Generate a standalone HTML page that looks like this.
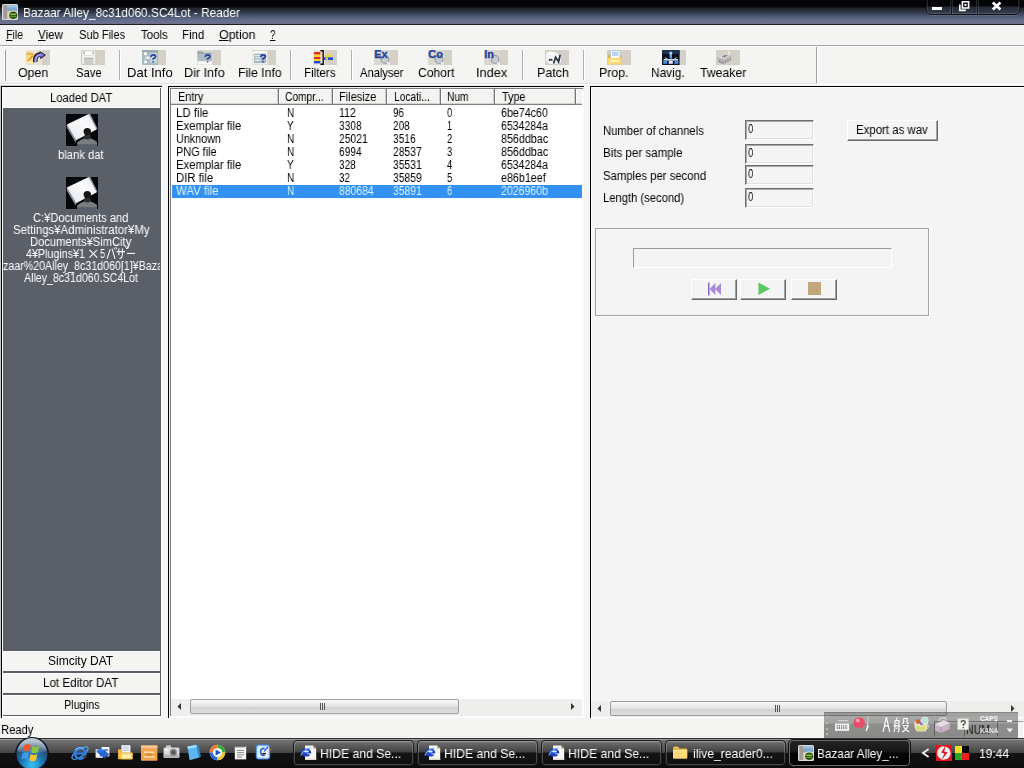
<!DOCTYPE html>
<html>
<head>
<meta charset="utf-8">
<title>Bazaar Alley_8c31d060.SC4Lot - Reader</title>
<style>
*{box-sizing:border-box;margin:0;padding:0}
html,body{width:1024px;height:768px;overflow:hidden;background:#f4f4f2;font-family:"Liberation Sans",sans-serif;color:#000}
#root{position:absolute;left:0;top:0;width:1024px;height:768px;overflow:hidden;background:#f4f4f2}
#root div,#root svg{position:absolute}
.t{white-space:nowrap;line-height:1;transform-origin:0 0;will-change:transform}
u{text-decoration:underline;text-underline-offset:1px}
.sep{top:50px;width:2px;height:30px;border-left:1px solid #b0b0b0;border-right:1px solid #fff}
.ib{top:50px;width:24px;height:15px;background:#d4d0c8}
.btn{background:#f4f4f2;border:1px solid;border-color:#fff #707070 #707070 #fff;box-shadow:inset -1px -1px 0 #a8a8a8}
.sunk{border:1px solid;border-color:#9a9a9a #fff #fff #9a9a9a}
</style>
</head>
<body>
<div id="root">

<div style="left:0;top:0;width:1024px;height:25px;background:linear-gradient(#0e1014 0,#040406 1px,#050608 7px,#20242a 8px,#262a34 10px,#30364a 12px,#47526a 15.5px,#5a6682 18.5px,#676f90 21px,#6e6f8a 23.5px,#1c1e26 24px,#1c1e26 25px)"></div>
<svg style="left:2px;top:4px" width="16" height="16" viewBox="0 0 16 16">
  <rect x="0" y="0" width="16" height="16" rx="1.5" fill="#d8dadc"/>
  <rect x="1" y="1" width="14" height="14" fill="#b9bcc0"/>
  <rect x="1.5" y="1" width="3.5" height="14" fill="#a29a96"/>
  <rect x="5" y="1" width="10" height="6.5" fill="#7fa6cc"/>
  <rect x="5" y="1" width="10" height="2.5" fill="#9fc0dc"/>
  <rect x="5" y="7" width="10" height="8" fill="#c9c6bc"/>
  <ellipse cx="11" cy="11" rx="5" ry="4.6" fill="#e6e3b4"/>
  <ellipse cx="11.2" cy="11.2" rx="4" ry="3.8" fill="#2d4a18"/>
  <rect x="8.3" y="9.6" width="5.8" height="1.4" fill="#8cc83c"/>
  <rect x="8.3" y="11.8" width="5.8" height="1.2" fill="#5e9a28"/>
</svg>
<div class="t" style="left:22.79px;top:6.0px;font-size:13px;color:#fff;transform:scaleX(0.9124)">Bazaar Alley_8c31d060.SC4Lot - Reader</div>
<div style="left:926px;top:-5px;width:94px;height:20px;border:1px solid #101218;border-radius:5px;background:linear-gradient(#000 0,#06070a 10px,#262a36 11px,#3a4054 19px);box-shadow:inset 0 0 0 1px rgba(255,255,255,.13),0 1px 0 rgba(255,255,255,.12)"></div>
<div style="left:950px;top:0;width:3px;height:14px;background:rgba(255,255,255,.13)"></div>
<div style="left:976px;top:0;width:3px;height:14px;background:rgba(255,255,255,.13)"></div>
<div style="left:951px;top:0;width:1px;height:14px;background:#101218"></div>
<div style="left:977px;top:0;width:1px;height:14px;background:#101218"></div>
<div style="left:932px;top:7px;width:10px;height:3px;background:#fff"></div>
<svg style="left:958px;top:0" width="13" height="12" viewBox="0 0 13 12"><path d="M4.4 1.8h6.2v6.2h-6.2z" fill="none" stroke="#fff" stroke-width="1.6"/><rect x="6.5" y="3.9" width="2" height="2" fill="#fff"/><path d="M1.8 4.4v6h6" fill="none" stroke="#fff" stroke-width="1.6"/></svg>
<svg style="left:991px;top:1px" width="11" height="10" viewBox="0 0 11 10"><path d="M1.8 1.6L9.4 8.6M9.4 1.6L1.8 8.6" stroke="#fff" stroke-width="2.7"/></svg>
<div style="left:0;top:25px;width:1024px;height:20px;background:#f4f4f2"></div><div class="t" style="left:5.98px;top:28.0px;font-size:13px;color:#000;transform:scaleX(0.8165)"><u>F</u>ile</div><div class="t" style="left:38.30px;top:28.0px;font-size:13px;color:#000;transform:scaleX(0.8965)"><u>V</u>iew</div><div class="t" style="left:78.70px;top:28.0px;font-size:13px;color:#000;transform:scaleX(0.8502)">Sub Files</div><div class="t" style="left:140.80px;top:28.0px;font-size:13px;color:#000;transform:scaleX(0.8817)">Tools</div><div class="t" style="left:181.81px;top:28.0px;font-size:13px;color:#000;transform:scaleX(0.8853)">Find</div><div class="t" style="left:218.60px;top:28.0px;font-size:13px;color:#000;transform:scaleX(0.9535)"><u>O</u>ption</div><div class="t" style="left:270.00px;top:28.0px;font-size:13px;color:#000;transform:scaleX(0.7571)"><u>?</u></div>
<div style="left:0;top:45px;width:1024px;height:1px;background:#a6a6a6"></div>
<div style="left:0;top:46px;width:1024px;height:1px;background:#fff"></div>
<div style="left:4px;top:50px;width:1px;height:31px;background:#fff"></div>
<div style="left:5px;top:50px;width:1px;height:31px;background:#9c9c9c"></div>
<div class="sep" style="left:119px"></div>
<div class="sep" style="left:290px"></div>
<div class="sep" style="left:351px"></div>
<div class="sep" style="left:522px"></div>
<div class="sep" style="left:583px"></div>
<div style="left:816px;top:47px;width:1px;height:37px;background:#a0a0a0"></div>
<div style="left:817px;top:47px;width:1px;height:37px;background:#fff"></div>
<div style="left:0;top:83px;width:817px;height:1px;background:#e2e2e0"></div>
<div style="left:0;top:84px;width:1024px;height:1px;background:#fff"></div>
<svg style="left:26px;top:50px" width="24" height="15" viewBox="0 0 24 15"><rect width="24" height="15" fill="#d4d0c8"/><rect x="0" y="0" width="16" height="15" fill="#ece4d0"/>
<path d="M0.5 2.5H6L7 3.8H9.5V13.2H0.5Z" fill="#f0b848"/><path d="M0.5 5.2H9.5V13.2H0.5Z" fill="#fcdc90"/>
<path d="M1.6 11L7 5.6" stroke="#e8982c" stroke-width="1.6"/><rect x="0.5" y="11.8" width="9" height="1.4" fill="#fff4d0"/>
<path d="M9.4 12.2Q8.2 4.6 15.6 4.4" fill="none" stroke="#1c1c40" stroke-width="4.6"/>
<path d="M13.6 1L20 5L14.4 9.2Z" fill="#1c1c40"/>
<path d="M9.6 12Q8.6 5 15.4 4.6" fill="none" stroke="#9c94e4" stroke-width="2.4"/>
<path d="M14.4 2.4L18.4 5L14.8 7.8Z" fill="#8078d0"/></svg><svg style="left:81px;top:50px" width="24" height="15" viewBox="0 0 24 15"><rect width="24" height="15" fill="#d4d0c8"/><rect x="0.6" y="0.6" width="14.2" height="13.8" rx="1" fill="#f2f2f0" stroke="#c4c4c0" stroke-width="0.9"/>
<rect x="3" y="0.8" width="9.4" height="4.8" fill="#fcfcfc" stroke="#d4d4d0" stroke-width="0.7"/>
<rect x="2.6" y="1.4" width="1.4" height="2.6" fill="#b8b8b4"/><rect x="11.2" y="1.4" width="1.4" height="2.6" fill="#b8b8b4"/>
<rect x="3" y="7.8" width="9.4" height="6.4" fill="#cccbc6"/><rect x="3" y="7.8" width="9.4" height="1.2" fill="#b8b8b4"/></svg><svg style="left:142px;top:50px" width="24" height="15" viewBox="0 0 24 15"><rect width="24" height="15" fill="#d4d0c8"/><rect width="16" height="15" fill="#a8b8bc"/>
<rect x="0" y="0" width="16" height="2" fill="#98a8b0"/>
<rect x="2" y="2.4" width="3" height="2.6" fill="#f4f8f8"/><rect x="4.6" y="6.4" width="3" height="2.6" fill="#f4f8f8"/><rect x="2" y="10.6" width="3" height="2.6" fill="#f4f8f8"/>
<path d="M3.4 5V11M3.4 7.6H5" stroke="#d8e4e4" stroke-width="0.8"/>
<rect x="7.6" y="3.2" width="7.4" height="10" fill="#c4d4d8"/><path d="M9.0 7Q9.0 4.8 11.2 4.8Q13.6 4.8 13.6 6.8Q13.6 8 11.2 8.8V9.8M11.2 11.2V12.6" fill="none" stroke="#2840a0" stroke-width="1.7"/></svg><svg style="left:197px;top:50px" width="24" height="15" viewBox="0 0 24 15"><rect width="24" height="15" fill="#d4d0c8"/><rect width="16" height="15" fill="#dcd8d0"/>
<path d="M0.6 1.6H5.4L6.4 2.8H15V13.6H0.6Z" fill="#aebcc0"/><path d="M0.6 1.6H5.4L6.4 2.8H15V4H0.6Z" fill="#98a8ac"/>
<path d="M0.6 11.2H15V13Q15 14.4 13.6 14.4H2Q0.6 14.4 0.6 13Z" fill="#fcfcfc"/><path d="M8.4 7Q8.4 4.8 10.6 4.8Q13.0 4.8 13.0 6.8Q13.0 8 10.6 8.8V9.8M10.6 11.2V12.6" fill="none" stroke="#2840a0" stroke-width="1.7"/></svg><svg style="left:252px;top:50px" width="24" height="15" viewBox="0 0 24 15"><rect width="24" height="15" fill="#d4d0c8"/><rect width="16" height="15" fill="#dcd8d0"/>
<rect x="0.6" y="1.2" width="14.6" height="13" rx="1.2" fill="#fafafa"/>
<rect x="1.8" y="3.6" width="12.4" height="9.6" fill="#a8b8c0"/>
<path d="M3 5.6H8.4M3 8H8.4M3 10.4H8.4" stroke="#e8f0f0" stroke-width="1.1"/><path d="M8.8 7Q8.8 4.8 11.0 4.8Q13.4 4.8 13.4 6.8Q13.4 8 11.0 8.8V9.8M11.0 11.2V12.6" fill="none" stroke="#2840a0" stroke-width="1.7"/></svg><svg style="left:313px;top:50px" width="24" height="15" viewBox="0 0 24 15"><rect width="24" height="15" fill="#d4d0c8"/><rect width="12" height="15" fill="#e8e4dc"/>
<rect x="1" y="2" width="6.4" height="2.6" fill="#e8281c"/><rect x="1" y="4.6" width="6.4" height="2.4" fill="#f8d81c"/>
<rect x="1" y="7" width="6.4" height="2" fill="#e8281c"/><rect x="1" y="9" width="6.4" height="2" fill="#f8d81c"/><rect x="1" y="11" width="6.4" height="2.4" fill="#2048d8"/>
<path d="M7.4 0.8H10.2V14.2H7.4" fill="none" stroke="#101010" stroke-width="1.4"/>
<rect x="12.4" y="4.6" width="6" height="2.4" fill="#f8d81c"/><rect x="11" y="7.4" width="9" height="2.6" fill="#2048d8"/><rect x="12.4" y="7.6" width="2.6" height="2.2" fill="#f8d81c"/></svg><svg style="left:374px;top:50px" width="24" height="15" viewBox="0 0 24 15"><rect width="24" height="15" fill="#d4d0c8"/><rect width="16" height="15" fill="#dcd8d0"/>
<circle cx="11" cy="9.4" r="3.9" fill="#c8ccd0" stroke="#9098a0" stroke-width="1.1"/>
<path d="M13.2 12.2L15.6 14.6" stroke="#f4f4f4" stroke-width="1.6"/>
<text x="0.2" y="8.4" font-family="Liberation Sans, sans-serif" font-weight="bold" font-size="11" fill="#2440a0" stroke="#2440a0" stroke-width="0.3">Ex</text></svg><svg style="left:428px;top:50px" width="24" height="15" viewBox="0 0 24 15"><rect width="24" height="15" fill="#d4d0c8"/><rect width="16" height="15" fill="#dcd8d0"/>
<circle cx="11" cy="9.4" r="3.9" fill="#c8ccd0" stroke="#9098a0" stroke-width="1.1"/>
<path d="M13.2 12.2L15.6 14.6" stroke="#f4f4f4" stroke-width="1.6"/>
<text x="0.2" y="8.4" font-family="Liberation Sans, sans-serif" font-weight="bold" font-size="11" fill="#2440a0" stroke="#2440a0" stroke-width="0.3">Co</text></svg><svg style="left:484px;top:50px" width="24" height="15" viewBox="0 0 24 15"><rect width="24" height="15" fill="#d4d0c8"/><rect width="16" height="15" fill="#dcd8d0"/>
<circle cx="11" cy="9.4" r="3.9" fill="#c8ccd0" stroke="#9098a0" stroke-width="1.1"/>
<path d="M13.2 12.2L15.6 14.6" stroke="#f4f4f4" stroke-width="1.6"/>
<text x="0.2" y="8.4" font-family="Liberation Sans, sans-serif" font-weight="bold" font-size="11" fill="#2440a0" stroke="#2440a0" stroke-width="0.3">In</text></svg><svg style="left:545px;top:50px" width="24" height="15" viewBox="0 0 24 15"><rect width="24" height="15" fill="#d4d0c8"/><path d="M1 3.4L4.4 1.4L12.6 3.2L15.8 6.4V12.6L9 14.2L3.6 13.8L1 10.4Z" fill="#f4f4f8"/>
<path d="M1 3.4L4.4 1.4L12.6 3.2L9 5.4Z" fill="#fcfcff"/>
<path d="M8.6 13.4L10.6 7.2L13.6 11.8L15.2 4.8" fill="none" stroke="#283440" stroke-width="1.7"/>
<path d="M3.8 10.6Q5.6 8.4 7.4 10.6" fill="none" stroke="#303030" stroke-width="1.5"/></svg><svg style="left:607px;top:50px" width="24" height="15" viewBox="0 0 24 15"><rect width="24" height="15" fill="#d4d0c8"/><path d="M0.8 4.4H4.8L5.8 5.6H14.6V14.2H0.8Z" fill="#e8b440"/>
<rect x="3.6" y="0.8" width="9.4" height="9" fill="#f8fcff" stroke="#a8c4e4" stroke-width="0.8"/>
<path d="M5.2 3H11.4M5.2 5H11.4" stroke="#78a8e0" stroke-width="1"/>
<path d="M0.8 8H14.6V14.2H0.8Z" fill="#fcd870"/><rect x="3" y="10" width="9.4" height="2.2" fill="#fff0b4"/></svg><svg style="left:662px;top:50px" width="24" height="15" viewBox="0 0 24 15"><rect width="24" height="15" fill="#d4d0c8"/><rect width="17.6" height="15" fill="#0c1424"/>
<rect x="0" y="0" width="17.6" height="4" fill="#1c3050"/>
<path d="M8.8 2.4V8.4" stroke="#70b0f0" stroke-width="2.2"/><circle cx="8.8" cy="3" r="1.6" fill="#a8d4ff"/>
<path d="M1.6 9.8H16" stroke="#e8f0ff" stroke-width="1.4"/>
<rect x="1.2" y="10.6" width="4" height="3.2" fill="#4c8ce0"/><rect x="6.8" y="10.6" width="4" height="3.2" fill="#dce8ff"/><rect x="12.4" y="10.6" width="4" height="3.2" fill="#4c8ce0"/>
<path d="M3 7.6L6 9.6M14.6 7.6L11.6 9.6" stroke="#c8dcff" stroke-width="1"/></svg><svg style="left:716px;top:50px" width="24" height="15" viewBox="0 0 24 15"><rect width="24" height="15" fill="#d4d0c8"/><path d="M1.4 7L9 2.4L15.6 5.2L15.2 9.6L7.4 13.8L1.6 11Z" fill="#b4b4b4"/>
<path d="M1.4 7L9 2.4L15.6 5.2L8 9.6Z" fill="#d8d8d8"/>
<path d="M3.2 10.6V12.6M5 11.4V13.4M7 12.2V14.2M9.6 11.4V13.2M12 10V12M14.4 8.8V10.6" stroke="#787878" stroke-width="1"/>
<path d="M5.6 6.6L9.4 4.4L12 5.6L8.2 7.8Z" fill="#8c8c8c"/>
<path d="M12 1.4L14 4" stroke="#f4f4f4" stroke-width="1.3"/></svg><div class="t" style="left:18.20px;top:66.0px;font-size:13px;color:#000;transform:scaleX(0.9534)">Open</div><div class="t" style="left:75.60px;top:66.0px;font-size:13px;color:#000;transform:scaleX(0.8639)">Save</div><div class="t" style="left:126.50px;top:66.0px;font-size:13px;color:#000;transform:scaleX(1.0046)">Dat Info</div><div class="t" style="left:183.63px;top:66.0px;font-size:13px;color:#000;transform:scaleX(0.9688)">Dir Info</div><div class="t" style="left:237.86px;top:66.0px;font-size:13px;color:#000;transform:scaleX(0.9442)">File Info</div><div class="t" style="left:304.31px;top:66.0px;font-size:13px;color:#000;transform:scaleX(0.8914)">Filters</div><div class="t" style="left:359.70px;top:66.0px;font-size:13px;color:#000;transform:scaleX(0.8586)">Analyser</div><div class="t" style="left:418.00px;top:66.0px;font-size:13px;color:#000;transform:scaleX(0.9313)">Cohort</div><div class="t" style="left:475.62px;top:66.0px;font-size:13px;color:#000;transform:scaleX(0.9840)">Index</div><div class="t" style="left:536.64px;top:66.0px;font-size:13px;color:#000;transform:scaleX(0.9590)">Patch</div><div class="t" style="left:598.65px;top:66.0px;font-size:13px;color:#000;transform:scaleX(0.9470)">Prop.</div><div class="t" style="left:651.49px;top:66.0px;font-size:13px;color:#000;transform:scaleX(0.9138)">Navig.</div><div class="t" style="left:700.00px;top:66.0px;font-size:13px;color:#000;transform:scaleX(0.9437)">Tweaker</div>
<div style="left:0;top:85px;width:162px;height:632px;background:#c8c8c8"></div>
<div style="left:1px;top:86px;width:161px;height:632px;background:#000"></div>
<div style="left:2px;top:87px;width:160px;height:631px;background:#fff"></div>
<div style="left:3px;top:88px;width:158px;height:628px;background:#5b5f68"></div>
<div style="left:3px;top:88px;width:157px;height:19px;background:#f4f4f2"></div>
<div style="left:3px;top:107px;width:157px;height:1px;background:#fff"></div>
<div style="left:161px;top:87px;width:1px;height:630px;background:#fff"></div>
<div style="left:3px;top:651px;width:157px;height:20px;background:#f4f4f2;border-top:1px solid #fff"></div>
<div style="left:3px;top:673px;width:157px;height:20px;background:#f4f4f2;border-top:1px solid #fff"></div>
<div style="left:3px;top:695px;width:157px;height:20px;background:#f4f4f2;border-top:1px solid #fff"></div>
<div style="left:2px;top:716px;width:160px;height:1px;background:#fff"></div>
<svg style="left:66px;top:114px" width="32" height="32" viewBox="0 0 32 32">
<defs><linearGradient id="pg1" x1="0" y1="1" x2="1" y2="0"><stop offset="0" stop-color="#e4e4ea"/><stop offset="0.6" stop-color="#fafafc"/><stop offset="1" stop-color="#e8eaf0"/></linearGradient></defs>
<rect width="32" height="32" fill="#04060a"/>
<polygon points="0.8,10.4 0.8,13.4 9.6,28.4 10.1,26.2" fill="#8e94a2"/>
<polygon points="22.7,0 0.8,10.4 10.1,26.2 30.9,15.3" fill="url(#pg1)"/>
<polygon points="22.7,0 24.2,0 31.4,14.6 30.9,15.3" fill="#aab0be"/>
<rect x="11.2" y="30.2" width="19.8" height="1.8" fill="#565e70"/>
<path d="M11.2 30.4 L11.2 28.2 Q15 25 18.6 24.4 L18.8 21 L24 21 L24.4 24.4 Q28 25.2 31 28 L31 30.4Z" fill="#7a7c7e"/>
<path d="M18.6 24.4 L18.8 20 L24 20 L24.4 24.4 Q21.5 26.5 18.6 24.4Z" fill="#2c2e2c"/>
<circle cx="21.3" cy="17.6" r="3.7" fill="#161816"/>
</svg><svg style="left:66px;top:177px" width="32" height="32" viewBox="0 0 32 32">
<defs><linearGradient id="pg2" x1="0" y1="1" x2="1" y2="0"><stop offset="0" stop-color="#e4e4ea"/><stop offset="0.6" stop-color="#fafafc"/><stop offset="1" stop-color="#e8eaf0"/></linearGradient></defs>
<rect width="32" height="32" fill="#04060a"/>
<polygon points="0.8,10.4 0.8,13.4 9.6,28.4 10.1,26.2" fill="#8e94a2"/>
<polygon points="22.7,0 0.8,10.4 10.1,26.2 30.9,15.3" fill="url(#pg2)"/>
<polygon points="22.7,0 24.2,0 31.4,14.6 30.9,15.3" fill="#aab0be"/>
<rect x="11.2" y="30.2" width="19.8" height="1.8" fill="#565e70"/>
<path d="M11.2 30.4 L11.2 28.2 Q15 25 18.6 24.4 L18.8 21 L24 21 L24.4 24.4 Q28 25.2 31 28 L31 30.4Z" fill="#7a7c7e"/>
<path d="M18.6 24.4 L18.8 20 L24 20 L24.4 24.4 Q21.5 26.5 18.6 24.4Z" fill="#2c2e2c"/>
<circle cx="21.3" cy="17.6" r="3.7" fill="#161816"/>
</svg><div class="t" style="left:49.80px;top:92.0px;font-size:12px;color:#000;transform:scaleX(0.9351)">Loaded DAT</div><div class="t" style="left:57.70px;top:149.0px;font-size:12px;color:#fff;transform:scaleX(0.9378)">blank dat</div><div class="t" style="left:33.20px;top:212.0px;font-size:12px;color:#fff;transform:scaleX(0.9290)">C:¥Documents and</div><div class="t" style="left:12.70px;top:224.0px;font-size:12px;color:#fff;transform:scaleX(0.9519)">Settings¥Administrator¥My</div><div class="t" style="left:30.40px;top:236.0px;font-size:12px;color:#fff;transform:scaleX(0.9319)">Documents¥SimCity</div><div class="t" style="left:26.40px;top:248.0px;font-size:12px;color:#fff;transform:scaleX(0.8918)">4¥Plugins¥1</div><div class="t" style="left:99.80px;top:248.0px;font-size:12px;color:#fff;transform:scaleX(0.7571)">5</div><svg style="left:84px;top:246px" width="60" height="16" viewBox="0 0 60 16" fill="none" stroke="#fff" stroke-width="1.05" stroke-linecap="square">
<path d="M5.8 4.2L12.8 11.2M12.8 4.2L5.8 11.2"/>
<path d="M26.1 3.6L23.2 12.4M28.2 3.2L30.9 12.4"/>
<path d="M30.4 2.0L31.0 3.2M32.0 1.4L32.6 2.6" stroke-width="0.9"/>
<path d="M33 5.6H40.4M34.9 3V8.6M38.4 3V9.2Q38.3 11.6 36 12.5"/>
<path d="M41.4 0.5L42.0 1.7M43.0 0.1L43.6 1.3" stroke-width="0.9"/>
<path d="M43.6 7.4H50.6"/>
</svg><div style="left:3px;top:258px;width:157px;height:15px;overflow:hidden"><div class="t" style="left:0.20px;top:2.0px;font-size:12px;color:#fff;transform:scaleX(0.8882)">zaar%20Alley_8c31d060[1]¥Bazaar</div></div><div class="t" style="left:24.00px;top:272.0px;font-size:12px;color:#fff;transform:scaleX(0.8847)">Alley_8c31d060.SC4Lot</div><div class="t" style="left:48.40px;top:655.0px;font-size:12px;color:#000;transform:scaleX(0.9958)">Simcity DAT</div><div class="t" style="left:43.40px;top:677.0px;font-size:12px;color:#000;transform:scaleX(0.9697)">Lot Editor DAT</div><div class="t" style="left:63.50px;top:699.0px;font-size:12px;color:#000;transform:scaleX(0.9071)">Plugins</div>
<div style="left:168px;top:86px;width:416px;height:632px;background:#000"></div>
<div style="left:169px;top:87px;width:415px;height:631px;background:#f2f2f0"></div>
<div style="left:170px;top:88px;width:413px;height:628px;background:#7c7c7c"></div>
<div style="left:171px;top:89px;width:412px;height:627px;background:#fff"></div>
<div style="left:583px;top:87px;width:1px;height:631px;background:#fbfbfb"></div>
<div style="left:169px;top:716px;width:415px;height:2px;background:#fbfbfb"></div>
<div style="left:171px;top:89px;width:411px;height:16px;background:#f3f3f1"></div>
<div style="left:171px;top:104px;width:411px;height:1px;background:#808080"></div>
<div style="left:171px;top:103px;width:411px;height:1px;background:#d4d4d2"></div>
<div style="left:171px;top:89px;width:107px;height:14px;border-left:1px solid #fff;border-top:1px solid #fff"></div><div style="left:277px;top:89px;width:1px;height:15px;background:#cfcfcd"></div><div style="left:278px;top:89px;width:1px;height:16px;background:#747474"></div><div style="left:279px;top:89px;width:53px;height:14px;border-left:1px solid #fff;border-top:1px solid #fff"></div><div style="left:331px;top:89px;width:1px;height:15px;background:#cfcfcd"></div><div style="left:332px;top:89px;width:1px;height:16px;background:#747474"></div><div style="left:333px;top:89px;width:53px;height:14px;border-left:1px solid #fff;border-top:1px solid #fff"></div><div style="left:385px;top:89px;width:1px;height:15px;background:#cfcfcd"></div><div style="left:386px;top:89px;width:1px;height:16px;background:#747474"></div><div style="left:387px;top:89px;width:53px;height:14px;border-left:1px solid #fff;border-top:1px solid #fff"></div><div style="left:439px;top:89px;width:1px;height:15px;background:#cfcfcd"></div><div style="left:440px;top:89px;width:1px;height:16px;background:#747474"></div><div style="left:441px;top:89px;width:53px;height:14px;border-left:1px solid #fff;border-top:1px solid #fff"></div><div style="left:493px;top:89px;width:1px;height:15px;background:#cfcfcd"></div><div style="left:494px;top:89px;width:1px;height:16px;background:#747474"></div><div style="left:495px;top:89px;width:80px;height:14px;border-left:1px solid #fff;border-top:1px solid #fff"></div><div style="left:574px;top:89px;width:1px;height:15px;background:#cfcfcd"></div><div style="left:575px;top:89px;width:1px;height:16px;background:#747474"></div><div style="left:576px;top:89px;width:6px;height:14px;border-left:1px solid #fff;border-top:1px solid #fff"></div><div class="t" style="left:177.60px;top:91.0px;font-size:12px;color:#000;transform:scaleX(0.9033)">Entry</div><div class="t" style="left:284.80px;top:91.0px;font-size:12px;color:#000;transform:scaleX(0.8509)">Compr...</div><div class="t" style="left:339.30px;top:91.0px;font-size:12px;color:#000;transform:scaleX(0.9170)">Filesize</div><div class="t" style="left:393.60px;top:91.0px;font-size:12px;color:#000;transform:scaleX(0.8515)">Locati...</div><div class="t" style="left:447.40px;top:91.0px;font-size:12px;color:#000;transform:scaleX(0.8485)">Num</div><div class="t" style="left:501.60px;top:91.0px;font-size:12px;color:#000;transform:scaleX(0.8997)">Type</div><div style="left:172px;top:185px;width:410px;height:13px;background:#3391f4"></div><div class="t" style="left:175.60px;top:107.0px;font-size:12px;color:#000;transform:scaleX(0.9522)">LD file</div><div class="t" style="left:286.50px;top:107.0px;font-size:12px;color:#000;transform:scaleX(0.8250)">N</div><div class="t" style="left:339.20px;top:107.0px;font-size:12px;color:#000;transform:scaleX(0.8737)">112</div><div class="t" style="left:392.80px;top:107.0px;font-size:12px;color:#000;transform:scaleX(0.8045)">96</div><div class="t" style="left:447.00px;top:107.0px;font-size:12px;color:#000;transform:scaleX(0.7714)">0</div><div class="t" style="left:500.80px;top:107.0px;font-size:12px;color:#000;transform:scaleX(0.8898)">6be74c60</div><div class="t" style="left:175.60px;top:120.0px;font-size:12px;color:#000;transform:scaleX(0.9400)">Exemplar file</div><div class="t" style="left:286.50px;top:120.0px;font-size:12px;color:#000;transform:scaleX(0.8250)">Y</div><div class="t" style="left:339.20px;top:120.0px;font-size:12px;color:#000;transform:scaleX(0.8512)">3308</div><div class="t" style="left:392.80px;top:120.0px;font-size:12px;color:#000;transform:scaleX(0.8355)">208</div><div class="t" style="left:447.00px;top:120.0px;font-size:12px;color:#000;transform:scaleX(0.7714)">1</div><div class="t" style="left:500.80px;top:120.0px;font-size:12px;color:#000;transform:scaleX(0.8787)">6534284a</div><div class="t" style="left:175.60px;top:133.0px;font-size:12px;color:#000;transform:scaleX(0.8996)">Unknown</div><div class="t" style="left:286.50px;top:133.0px;font-size:12px;color:#000;transform:scaleX(0.8250)">N</div><div class="t" style="left:339.20px;top:133.0px;font-size:12px;color:#000;transform:scaleX(0.8607)">25021</div><div class="t" style="left:392.80px;top:133.0px;font-size:12px;color:#000;transform:scaleX(0.8512)">3516</div><div class="t" style="left:447.00px;top:133.0px;font-size:12px;color:#000;transform:scaleX(0.7714)">2</div><div class="t" style="left:500.80px;top:133.0px;font-size:12px;color:#000;transform:scaleX(0.8954)">856ddbac</div><div class="t" style="left:175.60px;top:146.0px;font-size:12px;color:#000;transform:scaleX(0.9088)">PNG file</div><div class="t" style="left:286.50px;top:146.0px;font-size:12px;color:#000;transform:scaleX(0.8250)">N</div><div class="t" style="left:339.20px;top:146.0px;font-size:12px;color:#000;transform:scaleX(0.8512)">6994</div><div class="t" style="left:392.80px;top:146.0px;font-size:12px;color:#000;transform:scaleX(0.8607)">28537</div><div class="t" style="left:447.00px;top:146.0px;font-size:12px;color:#000;transform:scaleX(0.7714)">3</div><div class="t" style="left:500.80px;top:146.0px;font-size:12px;color:#000;transform:scaleX(0.8954)">856ddbac</div><div class="t" style="left:175.60px;top:159.0px;font-size:12px;color:#000;transform:scaleX(0.9400)">Exemplar file</div><div class="t" style="left:286.50px;top:159.0px;font-size:12px;color:#000;transform:scaleX(0.8250)">Y</div><div class="t" style="left:339.20px;top:159.0px;font-size:12px;color:#000;transform:scaleX(0.8355)">328</div><div class="t" style="left:392.80px;top:159.0px;font-size:12px;color:#000;transform:scaleX(0.8607)">35531</div><div class="t" style="left:447.00px;top:159.0px;font-size:12px;color:#000;transform:scaleX(0.7714)">4</div><div class="t" style="left:500.80px;top:159.0px;font-size:12px;color:#000;transform:scaleX(0.8787)">6534284a</div><div class="t" style="left:175.60px;top:172.0px;font-size:12px;color:#000;transform:scaleX(0.9429)">DIR file</div><div class="t" style="left:286.50px;top:172.0px;font-size:12px;color:#000;transform:scaleX(0.8250)">N</div><div class="t" style="left:339.20px;top:172.0px;font-size:12px;color:#000;transform:scaleX(0.8045)">32</div><div class="t" style="left:392.80px;top:172.0px;font-size:12px;color:#000;transform:scaleX(0.8607)">35859</div><div class="t" style="left:447.00px;top:172.0px;font-size:12px;color:#000;transform:scaleX(0.7714)">5</div><div class="t" style="left:500.80px;top:172.0px;font-size:12px;color:#000;transform:scaleX(0.8932)">e86b1eef</div><div class="t" style="left:175.60px;top:185.0px;font-size:12px;color:#d8f4ff;transform:scaleX(0.9534)">WAV file</div><div class="t" style="left:286.50px;top:185.0px;font-size:12px;color:#d8f4ff;transform:scaleX(0.8250)">N</div><div class="t" style="left:339.20px;top:185.0px;font-size:12px;color:#d8f4ff;transform:scaleX(0.8670)">880684</div><div class="t" style="left:392.80px;top:185.0px;font-size:12px;color:#d8f4ff;transform:scaleX(0.8607)">35891</div><div class="t" style="left:447.00px;top:185.0px;font-size:12px;color:#d8f4ff;transform:scaleX(0.7714)">6</div><div class="t" style="left:500.80px;top:185.0px;font-size:12px;color:#d8f4ff;transform:scaleX(0.8787)">2026960b</div>
<div style="left:171px;top:699px;width:411px;height:17px;background:#eeeeec"></div>
<div style="left:190px;top:699px;width:269px;height:15px;border:1px solid #9c9c9c;border-radius:2px;background:linear-gradient(#fafafa,#e2e2e2 50%,#d2d2d2 55%,#e0e0e0)"></div>
<div style="left:320px;top:703px;width:1px;height:7px;background:#555"></div>
<div style="left:322px;top:703px;width:1px;height:7px;background:#555"></div>
<div style="left:324px;top:703px;width:1px;height:7px;background:#555"></div>
<svg style="left:176px;top:702px" width="6" height="9" viewBox="0 0 6 9"><path d="M5 1L1.5 4.5L5 8Z" fill="#333"/></svg>
<svg style="left:570px;top:702px" width="6" height="9" viewBox="0 0 6 9"><path d="M1 1L4.5 4.5L1 8Z" fill="#333"/></svg>

<div style="left:590px;top:86px;width:434px;height:632px;background:#000"></div>
<div style="left:591px;top:87px;width:433px;height:632px;background:#fff"></div>
<div style="left:592px;top:88px;width:432px;height:629px;background:#f4f4f4"></div>
<div style="left:745px;top:120px;width:69px;height:20px;background:#f4f4f4;border:1px solid;border-color:#6e6e6e #fff #fff #6e6e6e;box-shadow:inset 1px 1px 0 #a8a8a8,inset -1px -1px 0 #e0e0e0"></div><div style="left:745px;top:144px;width:69px;height:20px;background:#f4f4f4;border:1px solid;border-color:#6e6e6e #fff #fff #6e6e6e;box-shadow:inset 1px 1px 0 #a8a8a8,inset -1px -1px 0 #e0e0e0"></div><div style="left:745px;top:165px;width:69px;height:20px;background:#f4f4f4;border:1px solid;border-color:#6e6e6e #fff #fff #6e6e6e;box-shadow:inset 1px 1px 0 #a8a8a8,inset -1px -1px 0 #e0e0e0"></div><div style="left:745px;top:188px;width:69px;height:20px;background:#f4f4f4;border:1px solid;border-color:#6e6e6e #fff #fff #6e6e6e;box-shadow:inset 1px 1px 0 #a8a8a8,inset -1px -1px 0 #e0e0e0"></div><div class="t" style="left:603.20px;top:125.0px;font-size:12px;color:#000;transform:scaleX(0.9386)">Number of channels</div><div class="t" style="left:603.20px;top:147.0px;font-size:12px;color:#000;transform:scaleX(0.9624)">Bits per sample</div><div class="t" style="left:602.70px;top:170.0px;font-size:12px;color:#000;transform:scaleX(0.9428)">Samples per second</div><div class="t" style="left:603.20px;top:192.0px;font-size:12px;color:#000;transform:scaleX(0.9351)">Length (second)</div><div class="t" style="left:747.80px;top:123.0px;font-size:12px;color:#000;transform:scaleX(0.7714)">0</div><div class="t" style="left:747.80px;top:147.0px;font-size:12px;color:#000;transform:scaleX(0.7714)">0</div><div class="t" style="left:747.80px;top:168.0px;font-size:12px;color:#000;transform:scaleX(0.7714)">0</div><div class="t" style="left:747.80px;top:191.0px;font-size:12px;color:#000;transform:scaleX(0.7714)">0</div><div style="left:847px;top:120px;width:91px;height:21px;background:#f4f4f4;border:1px solid;border-color:#fff #6a6a6a #6a6a6a #fff;box-shadow:inset -1px -1px 0 #a0a0a0"></div><div class="t" style="left:856.40px;top:124.0px;font-size:12px;color:#000;transform:scaleX(0.9527)">Export as wav</div>
<div style="left:595px;top:228px;width:335px;height:89px;border:1px solid #fff"></div>
<div style="left:595px;top:228px;width:334px;height:88px;border:1px solid #a2a2a2"></div>
<div style="left:633px;top:248px;width:259px;height:20px;border:1px solid;border-color:#9c9c9c #fff #fff #9c9c9c"></div>
<div style="left:691px;top:279px;width:46px;height:21px;background:#f4f4f4;border:1px solid;border-color:#fff #6a6a6a #6a6a6a #fff;box-shadow:inset -1px -1px 0 #a0a0a0"></div><div style="left:740px;top:279px;width:46px;height:21px;background:#f4f4f4;border:1px solid;border-color:#fff #6a6a6a #6a6a6a #fff;box-shadow:inset -1px -1px 0 #a0a0a0"></div><div style="left:791px;top:279px;width:46px;height:21px;background:#f4f4f4;border:1px solid;border-color:#fff #6a6a6a #6a6a6a #fff;box-shadow:inset -1px -1px 0 #a0a0a0"></div>
<svg style="left:707px;top:282px" width="15" height="14" viewBox="0 0 15 14"><rect x="1" y="0.6" width="1.5" height="12.8" fill="#8868b8"/><path d="M8.4 1L2.5 7L8.4 13Z" fill="#a98ad8"/><path d="M14 1L8 7L14 13Z" fill="#a98ad8"/></svg>
<svg style="left:757px;top:282px" width="14" height="14" viewBox="0 0 14 14"><path d="M1.4 0.6L13 6.8L1.4 13Z" fill="#5cc864"/></svg>
<div style="left:808px;top:282px;width:13px;height:13px;background:#c0a87c"></div>

<div style="left:591px;top:701px;width:433px;height:16px;background:#eeeeec"></div>
<div style="left:610px;top:701px;width:337px;height:15px;border:1px solid #9c9c9c;border-radius:2px;background:linear-gradient(#fafafa,#e2e2e2 50%,#d2d2d2 55%,#e0e0e0)"></div>
<div style="left:775px;top:705px;width:1px;height:7px;background:#555"></div>
<div style="left:777px;top:705px;width:1px;height:7px;background:#555"></div>
<div style="left:779px;top:705px;width:1px;height:7px;background:#555"></div>
<svg style="left:596px;top:704px" width="6" height="9" viewBox="0 0 6 9"><path d="M5 1L1.5 4.5L5 8Z" fill="#333"/></svg>
<svg style="left:1010px;top:704px" width="6" height="9" viewBox="0 0 6 9"><path d="M1 1L4.5 4.5L1 8Z" fill="#333"/></svg>
<div style="left:0;top:718px;width:1024px;height:20px;background:#f4f4f2"></div><div class="t" style="left:0.74px;top:722.5px;font-size:13px;color:#000;transform:scaleX(0.8630)">Ready</div>
<div style="left:934px;top:721px;width:29px;height:16px;border:1px solid;border-color:#9a9a9a #fff #fff #9a9a9a"></div>
<div style="left:964px;top:721px;width:32px;height:16px;border:1px solid;border-color:#9a9a9a #fff #fff #9a9a9a"></div>
<div style="left:997px;top:721px;width:27px;height:16px;border:1px solid;border-color:#9a9a9a #fff #fff #9a9a9a"></div>

<div style="left:0;top:738px;width:1024px;height:30px;background:linear-gradient(#303030 0,#303030 1px,#989898 1px,#989898 2px,#747474 2px,#5c5c5c 8px,#444 15px,#121212 15px,#0c0c0c 30px)"></div>

<svg style="left:14px;top:737px" width="36" height="31" viewBox="0 0 36 31">
<defs>
<radialGradient id="orb" cx="0.5" cy="0.85" r="0.75"><stop offset="0" stop-color="#34c4f8"/><stop offset="0.45" stop-color="#1c78b8"/><stop offset="0.8" stop-color="#2a4c70"/><stop offset="1" stop-color="#5c7c98"/></radialGradient>
<linearGradient id="orbh" x1="0" y1="0" x2="0" y2="1"><stop offset="0" stop-color="#fff" stop-opacity="0.65"/><stop offset="1" stop-color="#fff" stop-opacity="0.1"/></linearGradient>
</defs>
<circle cx="18" cy="17" r="17" fill="#0a1420"/>
<circle cx="18" cy="17" r="15.4" fill="url(#orb)"/>
<path d="M3.5 14A14.6 14.6 0 0 1 32.5 14Q18 19 3.5 14Z" fill="url(#orbh)"/>
<path d="M10.3 8.2Q13.5 6 16.8 8.3L15.4 14.6Q12.4 12.6 9 14.6Z" fill="#f0582c"/>
<path d="M18.4 8.9Q21.6 11 25.2 8.9L23.8 15.2Q20.4 17.2 17 15.2Z" fill="#8cc63c"/>
<path d="M8.6 16.2Q11.8 14.1 15 16.2L13.6 22.6Q10.4 20.4 7.2 22.6Z" fill="#3c9ce8"/>
<path d="M16.6 16.9Q19.8 19 23.4 16.9L22 23.2Q18.6 25.3 15.2 23.2Z" fill="#fcc02c"/>
</svg>

<svg style="left:70px;top:743px" width="20" height="20" viewBox="0 0 20 20">
<ellipse cx="10" cy="10" rx="9.6" ry="3.6" transform="rotate(-35 10 10)" fill="none" stroke="#58a8f0" stroke-width="1.2"/>
<circle cx="10.2" cy="10.4" r="5.2" fill="none" stroke="#2c7ce0" stroke-width="2.8"/>
<path d="M5.6 10.6H15.6" stroke="#2c7ce0" stroke-width="2.2"/>
<path d="M12.4 13.4L17 11.6L16.2 15.8Z" fill="#3a3a3a"/>
<path d="M5 6.6Q9 3.4 13.6 5.2" fill="none" stroke="#8cd0ff" stroke-width="1"/>
</svg>
<svg style="left:94px;top:744px" width="17" height="17" viewBox="0 0 17 17">
<rect x="7.4" y="3" width="8" height="9.4" fill="#f4f4f8"/>
<rect x="1.6" y="5.4" width="7.4" height="8.4" fill="#f4f4f8"/>
<path d="M2.2 7.6L7.4 3V5.6H11.4V9.4H7.4V12.2Z" fill="#2c74e4"/>
<path d="M15.4 10.6L10.2 15.2V12.6H6.2V8.8H10.2V6Z" fill="#1c54c4" opacity="0.9"/>
<rect x="11" y="5" width="3" height="2.2" fill="#7c8cb0"/>
</svg>
<svg style="left:117px;top:744px" width="17" height="17" viewBox="0 0 17 17">
<rect x="4.4" y="1.2" width="9" height="7.6" fill="#fafafa"/>
<path d="M5.6 3H12M5.6 4.8H12M5.6 6.6H12" stroke="#9cb8dc" stroke-width="0.8"/>
<rect x="1" y="5.2" width="3.6" height="10" rx="1" fill="#f0b840"/>
<rect x="3.6" y="8.4" width="12.2" height="7" rx="1" fill="#f8cc58"/>
<rect x="5.4" y="10.4" width="8.4" height="3.6" fill="#fff0b8"/>
</svg>
<svg style="left:141px;top:745px" width="17" height="16" viewBox="0 0 17 16">
<rect x="0" y="0.4" width="16.4" height="15.4" rx="0.8" fill="#f0a44c"/>
<rect x="0" y="0.4" width="16.4" height="3" fill="#f8c48c"/>
<path d="M3 7.2H13.4M3 11.8H13.4" stroke="#fcdcb0" stroke-width="1.6"/>
<rect x="5.6" y="8.6" width="5.4" height="2" fill="#d88430"/>
</svg>
<svg style="left:163px;top:745px" width="17" height="14" viewBox="0 0 17 14">
<rect x="3" y="0.4" width="5" height="3" fill="#c8c8c8"/>
<rect x="0.6" y="2.4" width="15.8" height="10.6" rx="1.2" fill="#dcdcdc"/>
<rect x="0.6" y="9.6" width="15.8" height="3.4" rx="1" fill="#b4b4b4"/>
<circle cx="10.4" cy="7.4" r="3.6" fill="#8c8c94"/>
<circle cx="10.4" cy="7.4" r="2.2" fill="#54545c"/>
<rect x="2" y="4.2" width="3" height="1.6" fill="#f8f8f8"/>
</svg>
<svg style="left:186px;top:744px" width="16" height="17" viewBox="0 0 16 17">
<path d="M1.4 2.4L10.2 0.8L13.4 13.4L3.6 16.2Z" fill="#5cb4f0"/>
<path d="M10.2 0.8L12.6 1.6L15 12.8L13.4 13.4Z" fill="#2c84c8"/>
<path d="M1.4 2.4L10.2 0.8L10.8 3.2L2 5Z" fill="#a0dcff"/>
</svg>
<svg style="left:209px;top:744px" width="17" height="17" viewBox="0 0 17 17">
<circle cx="8.5" cy="8.5" r="7.8" fill="#f4f4f4"/>
<path d="M8.5 0.7A7.8 7.8 0 0 1 16.3 8.5H12.6A4.1 4.1 0 0 0 8.5 4.4Z" fill="#38a838"/>
<path d="M0.7 8.5A7.8 7.8 0 0 1 8.5 0.7V4.4A4.1 4.1 0 0 0 4.4 8.5Z" fill="#f07828"/>
<path d="M8.5 16.3A7.8 7.8 0 0 1 0.7 8.5H4.4A4.1 4.1 0 0 0 8.5 12.6Z" fill="#2868d8"/>
<path d="M16.3 8.5A7.8 7.8 0 0 1 8.5 16.3V12.6A4.1 4.1 0 0 0 12.6 8.5Z" fill="#e8c830"/>
<circle cx="8.5" cy="8.5" r="4.6" fill="#fafafa"/>
<path d="M6.6 5.4L12 8.5L6.6 11.6Z" fill="#1c50c0"/>
</svg>
<svg style="left:234px;top:745px" width="13" height="15" viewBox="0 0 13 15">
<rect x="0.8" y="1.6" width="11.4" height="12.8" fill="#f4f4f0"/>
<path d="M2 1.2V2.6M4 1.2V2.6M6 1.2V2.6M8 1.2V2.6M10 1.2V2.6" stroke="#404040" stroke-width="0.9"/>
<path d="M3 5.4H10M3 7.6H10M3 9.8H10M3 12H8" stroke="#8c8c8c" stroke-width="1"/>
</svg>
<svg style="left:255px;top:744px" width="17" height="16" viewBox="0 0 17 16">
<rect x="0.8" y="0.6" width="14.4" height="14.8" rx="2.4" fill="#3c84ec"/>
<rect x="1.8" y="1.6" width="12.4" height="12.8" rx="1.8" fill="#c4e4ff"/>
<rect x="3.6" y="3" width="8.6" height="10" rx="1" fill="#f8fcff"/>
<path d="M9.6 4.4Q5.4 4 5.6 8Q5.8 11.8 9.8 11.2" fill="none" stroke="#2058d0" stroke-width="1.7"/>
<path d="M7.4 9.6H11" stroke="#181818" stroke-width="1.5"/>
<path d="M9 7.4L13 2.8" stroke="#2c6ce0" stroke-width="1.6"/>
<circle cx="15.6" cy="5.6" r="0.9" fill="#e05020"/>
</svg>
<div style="left:293px;top:740px;width:121px;height:26px;border-radius:4px;border:1px solid #1c1c1c;background:linear-gradient(#7e7e7e 0,#646464 3px,#404040 11px,#141414 12px,#101010 100%);box-shadow:inset 0 0 0 1px rgba(255,255,255,0.22)"></div><div style="left:417px;top:740px;width:121px;height:26px;border-radius:4px;border:1px solid #1c1c1c;background:linear-gradient(#7e7e7e 0,#646464 3px,#404040 11px,#141414 12px,#101010 100%);box-shadow:inset 0 0 0 1px rgba(255,255,255,0.22)"></div><div style="left:541px;top:740px;width:121px;height:26px;border-radius:4px;border:1px solid #1c1c1c;background:linear-gradient(#7e7e7e 0,#646464 3px,#404040 11px,#141414 12px,#101010 100%);box-shadow:inset 0 0 0 1px rgba(255,255,255,0.22)"></div><div style="left:665px;top:740px;width:121px;height:26px;border-radius:4px;border:1px solid #1c1c1c;background:linear-gradient(#7e7e7e 0,#646464 3px,#404040 11px,#141414 12px,#101010 100%);box-shadow:inset 0 0 0 1px rgba(255,255,255,0.22)"></div><div style="left:789px;top:740px;width:121px;height:26px;border-radius:4px;border:1px solid #6a6a6a;background:linear-gradient(#242424 0,#161616 11px,#050505 12px,#050505 100%);box-shadow:0 0 0 1px #101010"></div><svg style="left:300px;top:744px" width="17" height="17" viewBox="0 0 17 17">
<path d="M5 1.4H13L16.2 4.6V16H5Z" fill="#f6f6f2"/>
<path d="M13 1.4V4.6H16.2Z" fill="#d0a070"/>
<path d="M5 14.6H16.2V16H5Z" fill="#d8d8d0"/>
<ellipse cx="6.2" cy="8.6" rx="5" ry="4" fill="#1c44c8"/>
<ellipse cx="6.4" cy="7.6" rx="2.4" ry="1" fill="#f0f4ff"/>
<path d="M6.4 9.6H11.6V11L8.6 10.6Z" fill="#f6f6f2"/>
<path d="M0.8 11.6Q4 4.6 10.8 4" fill="none" stroke="#78acf8" stroke-width="1.1"/>
</svg><div class="t" style="left:319.96px;top:747.0px;font-size:13px;color:#fff;transform:scaleX(0.9366)">HIDE and Se...</div><svg style="left:424px;top:744px" width="17" height="17" viewBox="0 0 17 17">
<path d="M5 1.4H13L16.2 4.6V16H5Z" fill="#f6f6f2"/>
<path d="M13 1.4V4.6H16.2Z" fill="#d0a070"/>
<path d="M5 14.6H16.2V16H5Z" fill="#d8d8d0"/>
<ellipse cx="6.2" cy="8.6" rx="5" ry="4" fill="#1c44c8"/>
<ellipse cx="6.4" cy="7.6" rx="2.4" ry="1" fill="#f0f4ff"/>
<path d="M6.4 9.6H11.6V11L8.6 10.6Z" fill="#f6f6f2"/>
<path d="M0.8 11.6Q4 4.6 10.8 4" fill="none" stroke="#78acf8" stroke-width="1.1"/>
</svg><div class="t" style="left:443.96px;top:747.0px;font-size:13px;color:#fff;transform:scaleX(0.9366)">HIDE and Se...</div><svg style="left:548px;top:744px" width="17" height="17" viewBox="0 0 17 17">
<path d="M5 1.4H13L16.2 4.6V16H5Z" fill="#f6f6f2"/>
<path d="M13 1.4V4.6H16.2Z" fill="#d0a070"/>
<path d="M5 14.6H16.2V16H5Z" fill="#d8d8d0"/>
<ellipse cx="6.2" cy="8.6" rx="5" ry="4" fill="#1c44c8"/>
<ellipse cx="6.4" cy="7.6" rx="2.4" ry="1" fill="#f0f4ff"/>
<path d="M6.4 9.6H11.6V11L8.6 10.6Z" fill="#f6f6f2"/>
<path d="M0.8 11.6Q4 4.6 10.8 4" fill="none" stroke="#78acf8" stroke-width="1.1"/>
</svg><div class="t" style="left:567.96px;top:747.0px;font-size:13px;color:#fff;transform:scaleX(0.9366)">HIDE and Se...</div>
<svg style="left:672px;top:745px" width="17" height="15" viewBox="0 0 17 15">
<path d="M1 3Q1 1.5 2.5 1.5H6L7.6 3.4H14Q15.2 3.4 15.2 4.8V12.4Q15.2 13.6 14 13.6H2.4Q1 13.6 1 12.4Z" fill="#e8b848"/>
<path d="M1 5.6H15.2V12.4Q15.2 13.6 14 13.6H2.4Q1 13.6 1 12.4Z" fill="#fcd878"/>
<path d="M1 5.6H15.2" stroke="#fff0b0" stroke-width="0.9"/>
</svg><div class="t" style="left:692.50px;top:747.0px;font-size:13px;color:#fff;transform:scaleX(0.9355)">ilive_reader0...</div>
<svg style="left:798px;top:745px" width="16" height="16" viewBox="0 0 16 16">
  <rect x="0" y="0" width="16" height="16" rx="1.5" fill="#d8dadc"/>
  <rect x="1" y="1" width="14" height="14" fill="#b9bcc0"/>
  <rect x="1.5" y="1" width="3.5" height="14" fill="#a29a96"/>
  <rect x="5" y="1" width="10" height="6.5" fill="#7fa6cc"/>
  <rect x="5" y="1" width="10" height="2.5" fill="#9fc0dc"/>
  <rect x="5" y="7" width="10" height="8" fill="#c9c6bc"/>
  <ellipse cx="11" cy="11" rx="5" ry="4.6" fill="#e6e3b4"/>
  <ellipse cx="11.2" cy="11.2" rx="4" ry="3.8" fill="#2d4a18"/>
  <rect x="8.3" y="9.6" width="5.8" height="1.4" fill="#8cc83c"/>
  <rect x="8.3" y="11.8" width="5.8" height="1.2" fill="#5e9a28"/>
</svg><div class="t" style="left:817.10px;top:747.0px;font-size:13px;color:#fff;transform:scaleX(0.9024)">Bazaar Alley_...</div>
<svg style="left:921px;top:748px" width="9" height="10" viewBox="0 0 9 10"><path d="M7.6 1L2 5L7.6 9" fill="none" stroke="#e8e8e8" stroke-width="2"/></svg>
<svg style="left:936px;top:745px" width="16" height="16" viewBox="0 0 16 16"><rect width="16" height="16" fill="#e0141c"/><circle cx="8" cy="8" r="6.6" fill="#f0f0f0"/><path d="M9.6 0.6L5.2 7.6L8.4 8.6L5.4 15.6L11.6 7.2L8.2 6.4Z" fill="#e0141c"/><path d="M8 1.4A6.6 6.6 0 0 0 8 14.6" fill="none" stroke="#c8c8c8" stroke-width="1"/></svg>
<div style="left:955px;top:746px;width:7px;height:7px;background:#f0e020"></div>
<div style="left:962px;top:746px;width:7px;height:7px;background:#060606"></div>
<div style="left:955px;top:753px;width:7px;height:7px;background:#28a428"></div>
<div style="left:962px;top:753px;width:7px;height:7px;background:#f02020"></div>
<div class="t" style="left:979.00px;top:747.0px;font-size:13px;color:#fff;transform:scaleX(0.9256)">19:44</div><div class="t" style="left:966.10px;top:723.5px;font-size:12px;color:#000;transform:scaleX(0.8781)">NUM</div>
<div style="left:824px;top:712px;width:194px;height:26px;background:linear-gradient(rgba(70,70,70,.62) 0,rgba(70,70,70,.62) 1px,rgba(60,60,60,.42) 1px,rgba(60,60,60,.44) 11px,rgba(40,40,40,.5) 12px,rgba(40,40,40,.52) 26px)"></div>
<div style="left:826px;top:716px;width:2px;height:2px;background:#b8b8b8"></div>
<div style="left:826px;top:722px;width:2px;height:2px;background:#b8b8b8"></div>
<div style="left:826px;top:728px;width:2px;height:2px;background:#b8b8b8"></div>
<div style="left:826px;top:733px;width:2px;height:2px;background:#b8b8b8"></div>
<svg style="left:834px;top:718px" width="17" height="14" viewBox="0 0 17 14">
<path d="M4.2 3.2l1-1 1 1 1-1 1 1 1-1 1 1 1-1 1 1 1-1 1 1" fill="none" stroke="#e8e8e8" stroke-width="0.9"/>
<rect x="1" y="5.6" width="14.2" height="7.2" fill="#fafafa"/>
<path d="M2.6 7.8H13.8M2.6 10H13.8" stroke="#555" stroke-width="1.3" stroke-dasharray="1.2 1"/>
</svg>
<svg style="left:852px;top:714px" width="20" height="20" viewBox="0 0 20 20">
<circle cx="7.2" cy="8.8" r="5.6" fill="#e84c68"/>
<circle cx="5.8" cy="6.6" r="2" fill="#ff9cb0"/>
<path d="M7 14.4L5.6 17.4M8 14.4L9.6 17" stroke="#78a088" stroke-width="1"/>
<path d="M16.4 2.4L15.6 10" stroke="#e8c8b0" stroke-width="1"/>
<path d="M15.8 9.6L16.8 12.6L14.6 17.6L13.6 16.4Z" fill="#f8f8f8"/>
</svg>
<svg style="left:876px;top:712px" width="60" height="28" viewBox="0 0 60 28" fill="none" stroke="#fff" stroke-width="1.15" stroke-linejoin="miter">
<path d="M7.1 19.9L10.4 5.2L13.7 19.9M8.3 13.9H12.6"/>
<path d="M21.3 5.4L20.3 7.6M19 8.5H22.9V18.6Q22.9 19.9 21.6 19.6M19 8.5V15Q19 18 17.7 19.9M17.5 13.9H24.3M20.9 10.4V12M20.9 15.6V17.2"/>
<path d="M27.7 6.5V9.6Q27.5 11.4 26.3 12.1M27.7 6.5H31.1V10.4Q31.1 11.7 33 11.4M26.6 13.5H32.1Q30.6 17.8 26.1 19.9M27.5 14.6Q29.2 18.2 33.2 19.9"/>
</svg>
<svg style="left:913px;top:716px" width="18" height="18" viewBox="0 0 18 18">
<path d="M1.2 7.4Q2 3.4 8 4.6L14.6 6.6Q15.4 12 12.4 15.6H3.8Q1 12 1.2 7.4Z" fill="#e8e4b8"/>
<path d="M3 9.4Q6 12.6 12.6 9.6L12 14.8H4.2Z" fill="#d8dc78"/>
<circle cx="5" cy="5.6" r="2.4" fill="#d06038"/>
<circle cx="8.6" cy="7.2" r="2" fill="#8878c8"/>
<circle cx="11.8" cy="4.4" r="3.4" fill="#b8e0d0"/>
<circle cx="11.8" cy="4.4" r="3.4" fill="none" stroke="#e8e8f4" stroke-width="0.9"/>
<path d="M14.4 8Q17.4 9.4 14.2 13" fill="none" stroke="#c8c8d8" stroke-width="1"/>
</svg>
<svg style="left:934px;top:716px" width="17" height="18" viewBox="0 0 17 18">
<path d="M4.6 5.4Q5 2.6 8 1.8Q11 1.4 12.6 3.6" fill="none" stroke="#d8d0d8" stroke-width="1.3"/>
<path d="M1 8.4L9.6 4.2L15.8 6.8V13L7 17L1 14.6Z" fill="#c8b4c4"/>
<path d="M1 8.4L9.6 4.2L15.8 6.8L7 11Z" fill="#e8dce4"/>
<path d="M7 11V17" stroke="#a890a4" stroke-width="0.9"/>
</svg>
<svg style="left:957px;top:718px" width="13" height="13" viewBox="0 0 13 13">
<rect x="0.8" y="0.8" width="10.6" height="10.8" fill="#f4f4ec" stroke="#d0d0c8" stroke-width="0.8"/>
<path d="M4.2 4.4Q4.2 2.6 6.2 2.6Q8.2 2.6 8.2 4.4Q8.2 5.6 6.2 6.6V7.8M6.2 9V10.2" fill="none" stroke="#484848" stroke-width="1.3"/>
</svg>
<div style="left:1007px;top:720px;width:5px;height:2px;background:#f0f0f0"></div>
<svg style="left:1006px;top:728px" width="8" height="5" viewBox="0 0 8 5"><path d="M0.6 0.6H7L3.8 4.4Z" fill="#f0f0f0"/></svg>
<div class="t" style="left:980.40px;top:715.0px;font-size:7px;color:#fff;font-weight:bold;transform:scaleX(0.9202)">CAPS</div><div class="t" style="left:980.40px;top:727.0px;font-size:7px;color:#e8e8e8;font-weight:bold;transform:scaleX(0.9025)">KANA</div></div></body></html>
